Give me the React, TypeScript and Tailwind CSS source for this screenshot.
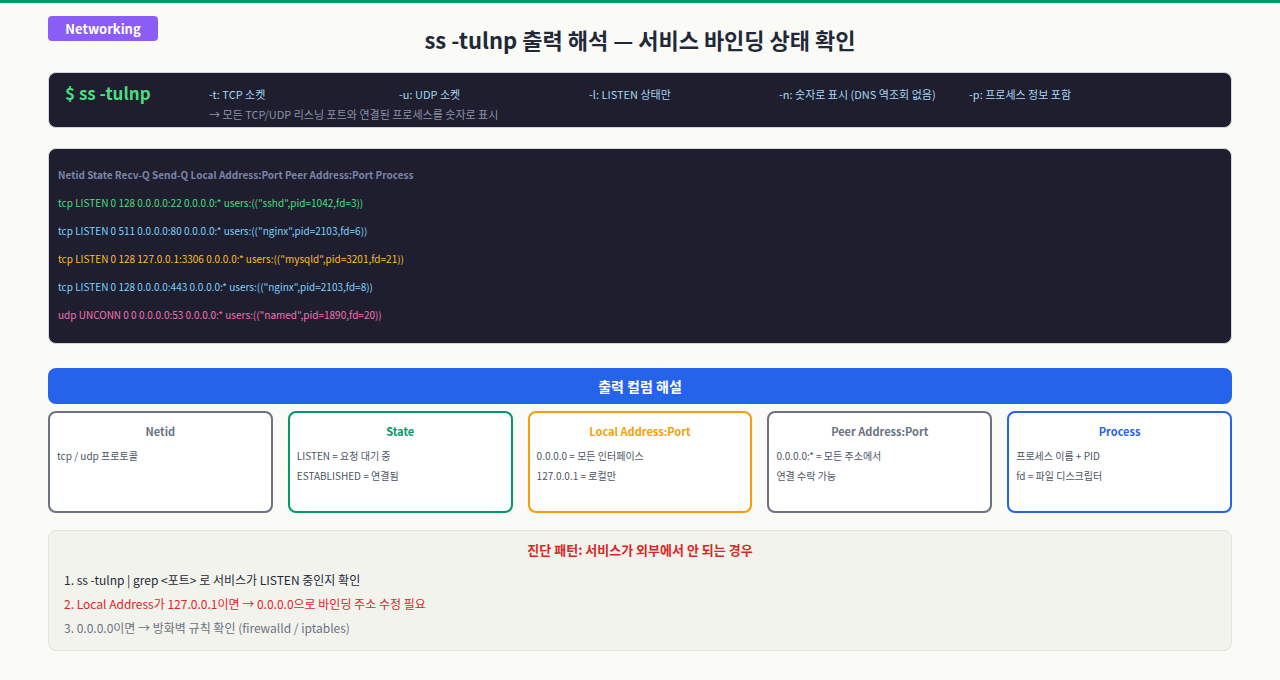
import React from 'react';

export default function App() {
  const opts = ['-t: TCP 소켓', '-u: UDP 소켓', '-l: LISTEN 상태만', '-n: 숫자로 표시 (DNS 역조회 없음)', '-p: 프로세스 정보 포함'];
  const lines = [
    { t: 'tcp LISTEN 0 128 0.0.0.0:22 0.0.0.0:* users:(("sshd",pid=1042,fd=3))', c: 'text-[#4ade80]' },
    { t: 'tcp LISTEN 0 511 0.0.0.0:80 0.0.0.0:* users:(("nginx",pid=2103,fd=6))', c: 'text-[#7dd3fc]' },
    { t: 'tcp LISTEN 0 128 127.0.0.1:3306 0.0.0.0:* users:(("mysqld",pid=3201,fd=21))', c: 'text-[#fbbf24]' },
    { t: 'tcp LISTEN 0 128 0.0.0.0:443 0.0.0.0:* users:(("nginx",pid=2103,fd=8))', c: 'text-[#7dd3fc]' },
    { t: 'udp UNCONN 0 0 0.0.0.0:53 0.0.0.0:* users:(("named",pid=1890,fd=20))', c: 'text-[#f472b6]' },
  ];
  const cards = [
    { title: 'Netid', border: 'border-[#6b7280]', color: 'text-[#6b7280]', items: ['tcp / udp 프로토콜'] },
    { title: 'State', border: 'border-[#059669]', color: 'text-[#059669]', items: ['LISTEN = 요청 대기 중', 'ESTABLISHED = 연결됨'] },
    { title: 'Local Address:Port', border: 'border-[#f59e0b]', color: 'text-[#f59e0b]', items: ['0.0.0.0 = 모든 인터페이스', '127.0.0.1 = 로컬만'] },
    { title: 'Peer Address:Port', border: 'border-[#6b7280]', color: 'text-[#6b7280]', items: ['0.0.0.0:* = 모든 주소에서', '연결 수락 가능'] },
    { title: 'Process', border: 'border-[#2563eb]', color: 'text-[#2563eb]', items: ['프로세스 이름 + PID', 'fd = 파일 디스크립터'] },
  ];

  return (
    <div className="w-[1280px] h-[680px] bg-[#fafaf7] border-t-[3px] border-[#059669] overflow-hidden" style={{ fontFamily: '"Noto Sans CJK KR", "Noto Sans", sans-serif' }}>
      <div className="px-12">
        <div className="relative h-[69px]">
          <span className="absolute left-0 top-[13px] w-[110px] h-[25px] rounded-[4px] bg-[#8b5cf6] text-white text-[13px] font-bold flex items-center justify-center">Networking</span>
          <h1 className="text-center pt-[20px] text-[22px] font-bold text-[#1f2937] leading-[32px]">ss -tulnp 출력 해석 — 서비스 바인딩 상태 확인</h1>
        </div>

        <div className="h-[56px] rounded-lg bg-[#1e1e2e] border border-[#d1d5db] flex px-4 pt-[8px]">
          <div className="w-[144px] text-[#4ade80] text-[17px] font-bold leading-[24px]">$ ss -tulnp</div>
          <div>
            <div className="flex text-[11px] text-[#a5d8f0] leading-[26px]">
              {opts.map((o) => (
                <span key={o} className="w-[190px]">{o}</span>
              ))}
            </div>
            <div className="text-[11px] text-[#8b93a8] leading-[14px]">→ 모든 TCP/UDP 리스닝 포트와 연결된 프로세스를 숫자로 표시</div>
          </div>
        </div>

        <div className="mt-[20px] h-[196px] rounded-lg bg-[#1e1e2e] border border-[#d1d5db] px-[9px] pt-[12px] text-[10px] leading-[28px]">
          <div className="text-[#7c84a8] font-bold">Netid State Recv-Q Send-Q Local Address:Port Peer Address:Port Process</div>
          {lines.map((l) => (
            <div key={l.t} className={l.c}>{l.t}</div>
          ))}
        </div>

        <div className="mt-[24px] h-[36px] rounded-lg bg-[#2563eb] text-white text-[14px] font-bold flex items-center justify-center">출력 컬럼 해설</div>

        <div className="mt-[7px] grid grid-cols-5 gap-[15px]">
          {cards.map((c) => (
            <div key={c.title} className={`h-[102px] rounded-lg border-2 bg-white px-[7px] ${c.border}`}>
              <div className={`text-center text-[11px] font-bold mt-[9px] leading-[18px] ${c.color}`}>{c.title}</div>
              <div className="mt-[6px] text-[10px] text-[#4b5563] leading-[20px]">
                {c.items.map((i) => (
                  <div key={i}>{i}</div>
                ))}
              </div>
            </div>
          ))}
        </div>

        <div className="mt-[17px] h-[121px] rounded-lg bg-[#f3f3ee] border border-[#e5e5df] px-[15px] pt-[9px]">
          <div className="text-center text-[13px] font-bold text-[#dc2626] leading-[20px]">진단 패턴: 서비스가 외부에서 안 되는 경우</div>
          <div className="mt-[8px] text-[12px] leading-[24px]">
            <div className="text-[#1f2937]">1. ss -tulnp | grep &lt;포트&gt; 로 서비스가 LISTEN 중인지 확인</div>
            <div className="text-[#dc2626]">2. Local Address가 127.0.0.1이면 → 0.0.0.0으로 바인딩 주소 수정 필요</div>
            <div className="text-[#6b7280]">3. 0.0.0.0이면 → 방화벽 규칙 확인 (firewalld / iptables)</div>
          </div>
        </div>
      </div>
    </div>
  );
}
